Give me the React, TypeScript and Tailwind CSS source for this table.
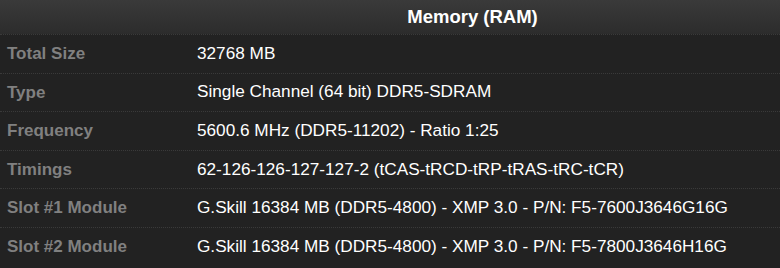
const rows: [string, string][] = [
  ['Total Size', '32768 MB'],
  ['Type', 'Single Channel (64 bit) DDR5-SDRAM'],
  ['Frequency', '5600.6 MHz (DDR5-11202) - Ratio 1:25'],
  ['Timings', '62-126-126-127-127-2 (tCAS-tRCD-tRP-tRAS-tRC-tCR)'],
  ['Slot #1 Module', 'G.Skill 16384 MB (DDR5-4800) - XMP 3.0 - P/N: F5-7600J3646G16G'],
  ['Slot #2 Module', 'G.Skill 16384 MB (DDR5-4800) - XMP 3.0 - P/N: F5-7800J3646H16G'],
];

export default function App() {
  return (
    <div className="w-[780px] h-[268px] overflow-hidden bg-[#222222] font-['Liberation_Sans',Arial,sans-serif]">
      <div className="h-[34px] flex bg-gradient-to-b from-[#3a3a3a] to-[#2c2c2c]">
        <div className="w-[190px]" />
        <div className="flex-1 pr-[25px] flex items-center justify-center text-white font-bold text-[18.5px]">
          Memory (RAM)
        </div>
      </div>
      {rows.map(([label, value]) => (
        <div
          key={label}
          className="h-[38.6px] flex items-center border-t border-dotted border-[#3a3a3a]"
        >
          <div className="w-[197px] pl-[7px] text-[#808080] font-bold text-[17px]">{label}</div>
          <div className="flex-1 text-white text-[17.2px]">{value}</div>
        </div>
      ))}
    </div>
  );
}
